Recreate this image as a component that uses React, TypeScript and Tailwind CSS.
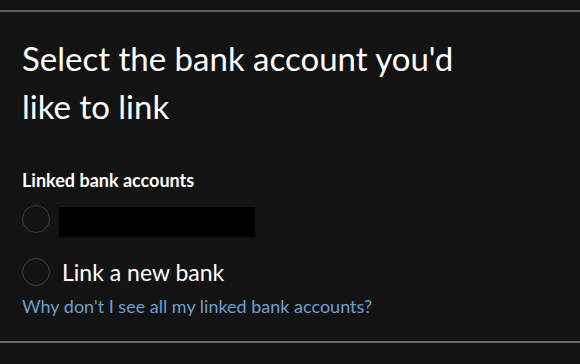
export default function App() {
  return (
    <div className="w-[580px] h-[364px] bg-[#131313] overflow-hidden font-['Lato',sans-serif] text-white">
      <div className="h-[10px]" />
      <div className="border-t-2 border-[#5e5e5e]" />
      <div className="px-[22px] pt-[22px]">
        <h1 className="w-[460px] text-[33px] leading-[48px] font-normal">
          Select the bank account you'd like to link
        </h1>
        <h2 className="mt-[39px] text-[18px] leading-[22px] font-bold">Linked bank accounts</h2>
        <div className="mt-[14px] flex items-start gap-[9px]">
          <span className="w-[28px] h-[28px] rounded-full border-[1.5px] border-[#3c3c3c]" />
          <span className="mt-[2px] w-[196px] h-[30px] bg-black" />
        </div>
        <div className="mt-[21px] flex items-start gap-[12px]">
          <span className="w-[28px] h-[28px] rounded-full border-[1.5px] border-[#3c3c3c]" />
          <span className="text-[23px] leading-[28px]">Link a new bank</span>
        </div>
        <a className="block mt-[9px] text-[18px] leading-[22px] text-[#6d9fd0]">
          Why don't I see all my linked bank accounts?
        </a>
      </div>
      <div className="mt-[24px] border-t-2 border-[#6b6b6b]" />
    </div>
  );
}
